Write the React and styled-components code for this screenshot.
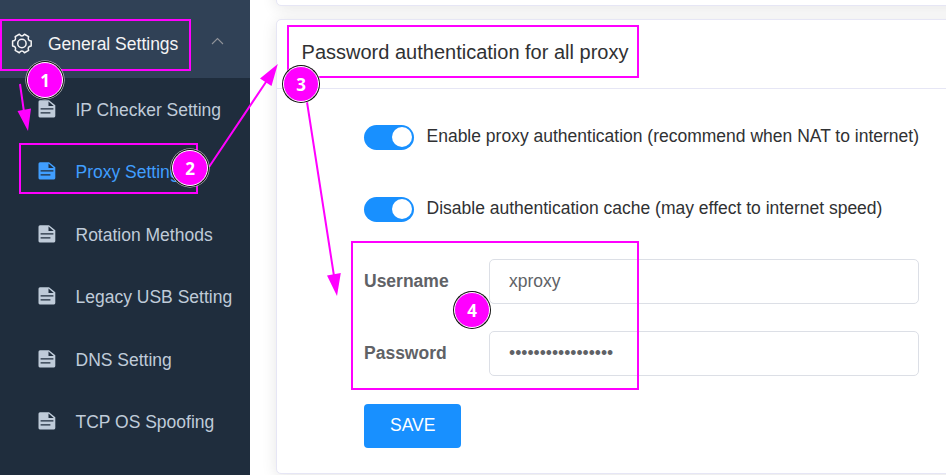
import React from "react";
import styled, { createGlobalStyle } from "styled-components";

const GlobalStyle = createGlobalStyle`
  * { box-sizing: border-box; }
  body { margin: 0; background: #fff; overflow: hidden; font-family: "Liberation Sans", Arial, sans-serif; font-size: 17.5px; }
`;

const Page = styled.div`
  position: relative;
  display: flex;
  width: 946px;
  height: 475px;
  overflow: hidden;
`;

const Sidebar = styled.nav`
  flex: 0 0 250px;
  background: #1f2d3d;
`;

const MenuTitle = styled.div`
  display: flex;
  align-items: center;
  height: 78px;
  padding: 9px 26px 0 11px;
  background: #304156;
  color: #f4f4f5;
  line-height: 20px;

  span { flex: 1; margin: 0 0 0 16px; }
`;

const MenuItem = styled.a`
  display: flex;
  align-items: center;
  gap: 20px;
  height: 62.5px;
  padding-left: 37.5px;
  white-space: nowrap;
  color: ${(p) => (p.$active ? "#409eff" : "#bfcbd9")};

  svg { flex: none; margin-top: -1px; }
  span { padding-top: 2px; }
`;

const Main = styled.main`
  flex: 1;
  display: flex;
  flex-direction: column;
  gap: 13px;
  padding-left: 26px;
`;

const Card = styled.section`
  width: 720px;
  flex: none;
  height: ${(p) => p.$height}px;
  margin-top: ${(p) => p.$offset || 0}px;
  background: #fff;
  border: 1px solid #e6e6f5;
  border-radius: 5px;
  box-shadow: 0 2.5px 15px rgba(0, 0, 0, 0.1);
`;

const CardHeader = styled.header`
  height: 69px;
  padding: 20px 0 0 24.6px;
  border-bottom: 1px solid #e6e6f5;
  font-size: 20px;
  line-height: 24px;
  color: #303133;
`;

const Form = styled.div`
  display: flex;
  flex-direction: column;
  align-items: flex-start;
  width: 642px;
  padding: 36px 0 0 87px;
`;

const SwitchRow = styled.label`
  display: flex;
  align-items: center;
  gap: 12.5px;
  height: 25px;
  margin-bottom: 47px;
  white-space: nowrap;
  color: #303133;

  span { margin-top: -3px; }
`;

const Switch = styled.i`
  width: 50px;
  height: 25px;
  padding: 2px;
  border-radius: 13px;
  background: #1890ff;

  &::after {
    content: "";
    display: block;
    width: 20px;
    height: 20px;
    margin-left: 26px;
    border-radius: 50%;
    background: #fff;
  }
`;

const Fields = styled.div`
  display: grid;
  gap: 27px;
  width: 555px;
  margin: -10px 0 28px;
`;

const Field = styled.label`
  display: grid;
  grid-template-columns: 125px 430px;
  align-items: center;
  font-weight: 700;
  color: #606266;
`;

const Input = styled.input`
  width: 430px;
  height: 45px;
  padding: 0 19px;
  border: 1px solid #dcdfe6;
  border-radius: 5px;
  outline: 0;
  font: 17.5px "Liberation Sans", Arial, sans-serif;
  color: #606266;
`;

const SaveButton = styled.button`
  width: 97px;
  height: 44px;
  padding: 0 0 1px 0.5px;
  border: 0;
  border-radius: 4px;
  background: #1890ff;
  color: #fff;
  font: 17.5px "Liberation Sans", Arial, sans-serif;
`;

const Highlight = styled.div`
  position: absolute;
  left: ${(p) => p.$x}px;
  top: ${(p) => p.$y}px;
  width: ${(p) => p.$w}px;
  height: ${(p) => p.$h}px;
  border: 2px solid #f0f;
  pointer-events: none;
`;

const Arrows = styled.svg`
  position: absolute;
  inset: 0;
  pointer-events: none;
`;

const Marker = styled.b`
  position: absolute;
  left: ${(p) => p.$x - 18}px;
  top: ${(p) => p.$y - 18}px;
  width: 36px;
  height: 36px;
  border: 1px solid #fff;
  border-radius: 50%;
  background: #f0f;
  box-shadow: 0 0 0 1px #111, 0 0 0 1.6px rgba(255, 255, 255, 0.8);
  color: #fff;
  font: 700 17px/35px "Open Sans", sans-serif;
  text-align: center;
`;

const DocumentIcon = () => (
  <svg width="18" height="18" viewBox="0 0 18 18">
    <path
      fill="currentColor"
      fillRule="evenodd"
      d="M2 .2h9l6.3 5v10.9a1.3 1.3 0 0 1-1.3 1.3H1.8A1.3 1.3 0 0 1 .5 16.1V1.7A1.5 1.5 0 0 1 2 .2ZM10.5 1.4v4.7h5.2ZM2.6 8.2v1.4h12.8V8.2ZM2.6 12.2v1.4h9.8v-1.4Z"
    />
  </svg>
);

const GearIcon = () => (
  <svg width="21" height="21" viewBox="-0.4 0 21 21" fill="none" stroke="currentColor" strokeWidth="1.5" strokeLinejoin="round">
    <path d="M19.8 12.9Q15.65 13.5 17.23 17.35L13.07 19.75Q10.5 16.45 7.93 19.75L3.77 17.35Q5.35 13.5 1.2 12.9V8.1Q5.35 7.5 3.77 3.65L7.93 1.25Q10.5 4.55 13.07 1.25L17.23 3.65Q15.65 7.5 19.8 8.1Z" />
    <circle cx="10.5" cy="10.5" r="4.2" />
  </svg>
);

const ChevronUp = () => (
  <svg width="13" height="8" viewBox="0 0 13 8" fill="none" stroke="#909399" strokeWidth="1.1">
    <path d="m1 7 5.5-5.5L12 7" />
  </svg>
);

const ChevronSlot = styled.i`
  display: flex;
  margin-top: -5px;
`;

const menu = ["IP Checker Setting", "Proxy Setting", "Rotation Methods", "Legacy USB Setting", "DNS Setting", "TCP OS Spoofing"];

export default function App() {
  return (
    <Page>
      <GlobalStyle />
      <Sidebar>
        <MenuTitle>
          <GearIcon />
          <span>General Settings</span>
          <ChevronSlot>
            <ChevronUp />
          </ChevronSlot>
        </MenuTitle>
        {menu.map((name) => (
          <MenuItem key={name} $active={name === "Proxy Setting"}>
            <DocumentIcon />
            <span>{name}</span>
          </MenuItem>
        ))}
      </Sidebar>

      <Main>
        <Card $height={46} $offset={-40} />
        <Card $height={455}>
          <CardHeader>Password authentication for all proxy</CardHeader>
          <Form>
            <SwitchRow>
              <Switch />
              <span>Enable proxy authentication (recommend when NAT to internet)</span>
            </SwitchRow>
            <SwitchRow>
              <Switch />
              <span>Disable authentication cache (may effect to internet speed)</span>
            </SwitchRow>
            <Fields>
              <Field>
                Username
                <Input defaultValue="xproxy" />
              </Field>
              <Field>
                Password
                <Input type="password" defaultValue="xproxypassword123" />
              </Field>
            </Fields>
            <SaveButton>SAVE</SaveButton>
          </Form>
        </Card>
      </Main>

      <Highlight $x={0} $y={19} $w={191} $h={52} />
      <Highlight $x={19} $y={143} $w={179} $h={51} />
      <Highlight $x={287} $y={25} $w={352} $h={53} />
      <Highlight $x={351} $y={241} $w={288} $h={149} />
      <Arrows width="946" height="475" fill="#f0f" stroke="#f0f" strokeWidth="2">
        <path d="M20 84 24 112M209 167 268 79M307 102 334 276" />
        <path stroke="none" d="M17.5 111 31 108.5 28 131ZM260 78.5 271.5 86 277.8 64ZM327 275.5 340.8 273 337 296Z" />
      </Arrows>
      <Marker $x={45} $y={80}>1</Marker>
      <Marker $x={190} $y={168}>2</Marker>
      <Marker $x={301} $y={84}>3</Marker>
      <Marker $x={472} $y={310}>4</Marker>
    </Page>
  );
}
